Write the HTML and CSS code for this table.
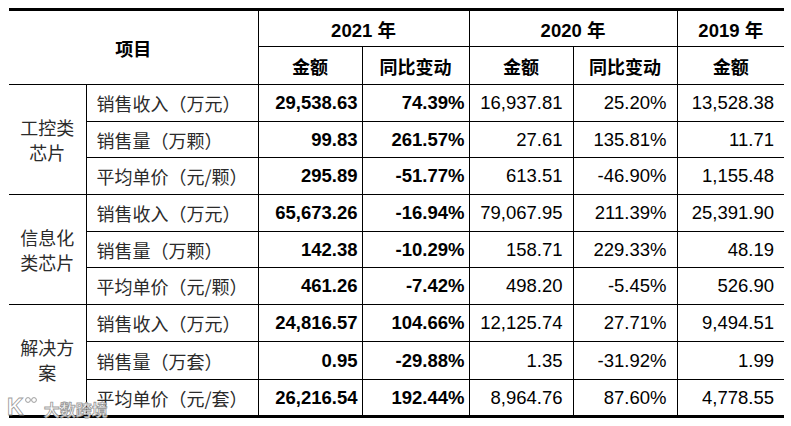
FILE: index.html
```html
<!DOCTYPE html>
<html lang="zh">
<head>
<meta charset="utf-8">
<link rel="stylesheet" href="styles.css">
</head>
<body>
<div class="page">
<table class="data">
  <colgroup>
    <col class="c1"><col class="c2"><col class="c3"><col class="c4"><col class="c5"><col class="c6"><col class="c7">
  </colgroup>
  <thead>
    <tr class="h1">
      <th class="hd cj" colspan="2" rowspan="2">项目</th>
      <th class="yr" colspan="2">2021 <span class="cj">年</span></th>
      <th class="yr" colspan="2">2020 <span class="cj">年</span></th>
      <th class="yr">2019 <span class="cj">年</span></th>
    </tr>
    <tr class="h2">
      <th class="hd cj">金额</th>
      <th class="hd cj">同比变动</th>
      <th class="hd cj">金额</th>
      <th class="hd cj">同比变动</th>
      <th class="hd cj">金额</th>
    </tr>
  </thead>
  <tbody>
    <tr class="r1">
      <td class="grp" rowspan="3">工控类<br>芯片</td>
      <td class="lbl">销售收入（万元）</td>
      <td class="b n">29,538.63</td><td class="b p">74.39%</td>
      <td class="n">16,937.81</td><td class="n">25.20%</td><td class="n">13,528.38</td>
    </tr>
    <tr class="r2">
      <td class="lbl">销售量（万颗）</td>
      <td class="b n">99.83</td><td class="b p">261.57%</td>
      <td class="n">27.61</td><td class="n">135.81%</td><td class="n">11.71</td>
    </tr>
    <tr class="r3 end">
      <td class="lbl">平均单价（元/颗）</td>
      <td class="b n">295.89</td><td class="b p">-51.77%</td>
      <td class="n">613.51</td><td class="n">-46.90%</td><td class="n">1,155.48</td>
    </tr>
    <tr class="r4">
      <td class="grp" rowspan="3">信息化<br>类芯片</td>
      <td class="lbl">销售收入（万元）</td>
      <td class="b n">65,673.26</td><td class="b p">-16.94%</td>
      <td class="n">79,067.95</td><td class="n">211.39%</td><td class="n">25,391.90</td>
    </tr>
    <tr class="r5">
      <td class="lbl">销售量（万颗）</td>
      <td class="b n">142.38</td><td class="b p">-10.29%</td>
      <td class="n">158.71</td><td class="n">229.33%</td><td class="n">48.19</td>
    </tr>
    <tr class="r6 end">
      <td class="lbl">平均单价（元/颗）</td>
      <td class="b n">461.26</td><td class="b p">-7.42%</td>
      <td class="n">498.20</td><td class="n">-5.45%</td><td class="n">526.90</td>
    </tr>
    <tr class="r7">
      <td class="grp" rowspan="3">解决方<br>案</td>
      <td class="lbl">销售收入（万元）</td>
      <td class="b n">24,816.57</td><td class="b p">104.66%</td>
      <td class="n">12,125.74</td><td class="n">27.71%</td><td class="n">9,494.51</td>
    </tr>
    <tr class="r8">
      <td class="lbl">销售量（万套）</td>
      <td class="b n">0.95</td><td class="b p">-29.88%</td>
      <td class="n">1.35</td><td class="n">-31.92%</td><td class="n">1.99</td>
    </tr>
    <tr class="r9">
      <td class="lbl">平均单价（元/套）</td>
      <td class="b n">26,216.54</td><td class="b p">192.44%</td>
      <td class="n">8,964.76</td><td class="n">87.60%</td><td class="n">4,778.55</td>
    </tr>
  </tbody>
</table>
<div class="wm">
  <span class="wm-k">K</span>
  <svg class="wm-o" width="12" height="8" viewBox="0 0 12 8"><circle cx="3" cy="4" r="2.4" fill="rgba(255,255,255,0.85)" stroke="rgba(140,140,140,0.85)" stroke-width="1"/><circle cx="9" cy="4" r="2.4" fill="rgba(255,255,255,0.85)" stroke="rgba(140,140,140,0.85)" stroke-width="1"/></svg>
  <span class="wm-t">大数跨境</span>
</div>
</div>
</body>
</html>
```

FILE: styles.css
```css
html, body {
  margin: 0;
  padding: 0;
  background: #ffffff;
}
.page {
  position: relative;
  width: 791px;
  height: 426px;
  padding: 8px 0 0 9px;
  box-sizing: border-box;
}
.data {
  border-collapse: collapse;
  table-layout: fixed;
  width: 775px;
  color: #000;
  font-family: "Liberation Sans", Arial, sans-serif;
  font-size: 18.5px;
  border-top: 3px solid #000;
  border-bottom: 3px solid #000;
}
.c1 { width: 77px; }
.c2 { width: 172px; }
.c3 { width: 104px; }
.c4 { width: 107px; }
.c5 { width: 104px; }
.c6 { width: 104px; }
.c7 { width: 107px; }
.data th, .data td {
  border: 1px solid #000;
  padding: 0;
  vertical-align: middle;
  white-space: nowrap;
  overflow: visible;
}
.data tr > :first-child { border-left: none; }
.data tr > :last-child { border-right: none; }
.cj {
  font-family: "Noto Sans CJK SC", sans-serif;
}
.h1 { height: 37px; }
.h2 { height: 38px; }
.yr {
  font-weight: bold;
  text-align: center;
}
.yr .cj { font-weight: bold; }
.hd {
  font-weight: bold;
  font-size: 18px;
  text-align: center;
}
.data tbody tr { height: 37px; }
.data tbody tr.r2, .data tbody tr.r5 { height: 36px; }
.data tbody tr.r8 { height: 38px; }
.grp {
  font-family: "Noto Sans CJK SC", sans-serif;
  font-size: 18px;
  line-height: 25px;
  text-align: center;
  color: #2b2b2b;
  border-right: 1px solid #000;
}
.lbl {
  font-family: "Noto Sans CJK SC", sans-serif;
  font-size: 18px;
  color: #2b2b2b;
  padding-left: 10px !important;
  text-align: left;
}
.n {
  text-align: right;
  padding-right: 10px !important;
}
.b {
  font-weight: bold;
}
.b.n, .b.p {
  text-align: right;
  padding-right: 4px !important;
}
.wm {
  position: absolute;
  left: 7px;
  top: 395px;
  display: flex;
  align-items: flex-start;
  font-family: "Noto Sans CJK SC", sans-serif;
  color: rgba(255, 255, 255, 0.85);
  -webkit-text-stroke: 0.9px rgba(140, 140, 140, 0.85);
}
.wm-k {
  font-family: "Liberation Sans", sans-serif;
  font-size: 23px;
  font-weight: bold;
  line-height: 24px;
}
.wm-o {
  display: block;
  margin-top: 1px;
  margin-left: 1px;
  margin-right: 7px;
}
.wm-t {
  font-size: 16px;
  font-weight: bold;
  line-height: 20px;
  margin-top: 4px;
}
```
